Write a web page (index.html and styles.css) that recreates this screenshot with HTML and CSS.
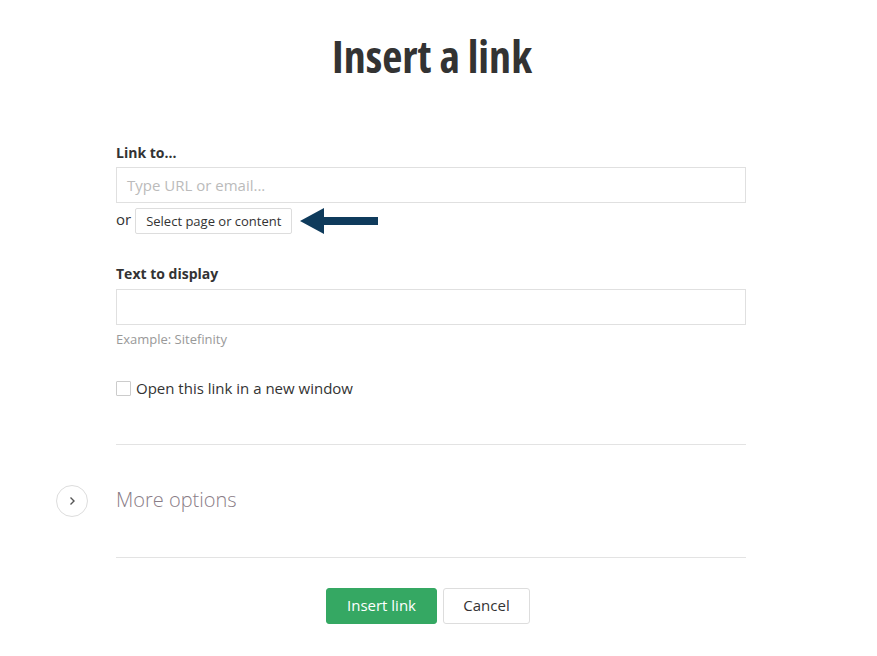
FILE: index.html
```html
<!DOCTYPE html>
<html>
<head>
<meta charset="utf-8">
<link rel="stylesheet" href="styles.css">
</head>
<body>
<div class="page">
  <h1 class="title">Insert a link</h1>
  <div class="form">
    <label class="label">Link to...</label>
    <div class="input placeholder">Type URL or email...</div>
    <div class="or-row">
      <span class="or">or</span>
      <button class="select-btn">Select page or content</button>
      <svg class="arrow" width="80" height="26" viewBox="0 0 80 26"><path d="M0 13 L24 0 L24 9 L78 9 L78 17 L24 17 L24 26 Z" fill="#0f3b5c"/></svg>
    </div>
    <label class="label label2">Text to display</label>
    <div class="input"></div>
    <div class="hint">Example: Sitefinity</div>
    <div class="check-row">
      <span class="checkbox"></span>
      <span class="check-label">Open this link in a new window</span>
    </div>
    <div class="divider first"></div>
    <div class="more">
      <span class="circle"><svg width="12" height="12" viewBox="0 0 12 12"><path d="M4.5 2.5 L8 6 L4.5 9.5" fill="none" stroke="#555" stroke-width="1.4"/></svg></span>
      <span class="more-text">More options</span>
    </div>
    <div class="divider"></div>
    <div class="actions">
      <button class="primary">Insert link</button>
      <button class="secondary">Cancel</button>
    </div>
  </div>
</div>
</body>
</html>
```
FILE: styles.css
```css
* { box-sizing: border-box; }
body {
  margin: 0;
  background: #fff;
  font-family: "Open Sans", "Noto Sans", sans-serif;
  color: #333;
}
.page {
  width: 877px;
  padding-top: 29px;
}
.title {
  margin: 0;
  text-align: center;
  font-family: "Open Sans", sans-serif;
  font-stretch: 75%;
  font-weight: 700;
  font-size: 44px;
  line-height: 54px;
  color: #333;
  padding-right: 13px;
}
.form {
  width: 630px;
  margin-left: 116px;
  padding-top: 60px;
  position: relative;
}
.label {
  display: block;
  font-size: 14px;
  font-weight: 700;
  line-height: 20px;
  color: #333;
  margin-bottom: 4px;
}
.label2 { margin-top: 30px; margin-bottom: 5px; }
.input {
  height: 36px;
  border: 1px solid #e0e0e0;
  font-size: 15px;
  line-height: 34px;
  padding-left: 10px;
}
.placeholder { color: #bbb; }
.or-row {
  display: flex;
  align-items: center;
  margin-top: 5px;
  height: 26px;
}
.or { font-size: 15px; color: #333; margin-right: 4px; position: relative; top: -2px; }
.select-btn {
  height: 26px;
  border: 1px solid #ddd;
  background: #fff;
  font-family: "Open Sans", sans-serif;
  font-size: 13px;
  color: #333;
  padding: 0 10px;
  border-radius: 2px;
}
.arrow { margin-left: 8px; }
.hint {
  font-size: 13px;
  color: #999;
  margin-top: 5px;
  line-height: 18px;
}
.check-row {
  display: flex;
  align-items: center;
  margin-top: 30px;
}
.checkbox {
  width: 15px;
  height: 15px;
  border: 1px solid #ccc;
  border-radius: 1px;
  margin-right: 5px;
}
.check-label { font-size: 15px; color: #333; line-height: 20px; }
.divider {
  height: 1px;
  background: #e3e3e3;
}
.divider.first { margin-top: 46px; }
.more {
  display: flex;
  align-items: center;
  height: 112px;
  position: relative;
}
.circle {
  position: absolute;
  left: -60px;
  width: 32px;
  height: 32px;
  border: 1px solid #ddd;
  border-radius: 50%;
  display: flex;
  align-items: center;
  justify-content: center;
}
.more-text {
  font-size: 20px;
  font-weight: 300;
  color: #8a7d87;
  margin-top: -3px;
}
.actions {
  display: flex;
  justify-content: center;
  gap: 6px;
  margin-top: 30px;
  padding-right: 6px;
}
.primary, .secondary {
  height: 36px;
  font-family: "Open Sans", sans-serif;
  font-size: 15px;
  border-radius: 3px;
  padding-bottom: 3px;
}
.primary {
  background: #35a863;
  color: #fff;
  border: 1px solid #35a863;
  width: 111px;
}
.secondary {
  background: #fff;
  color: #333;
  border: 1px solid #ddd;
  width: 87px;
}
```
